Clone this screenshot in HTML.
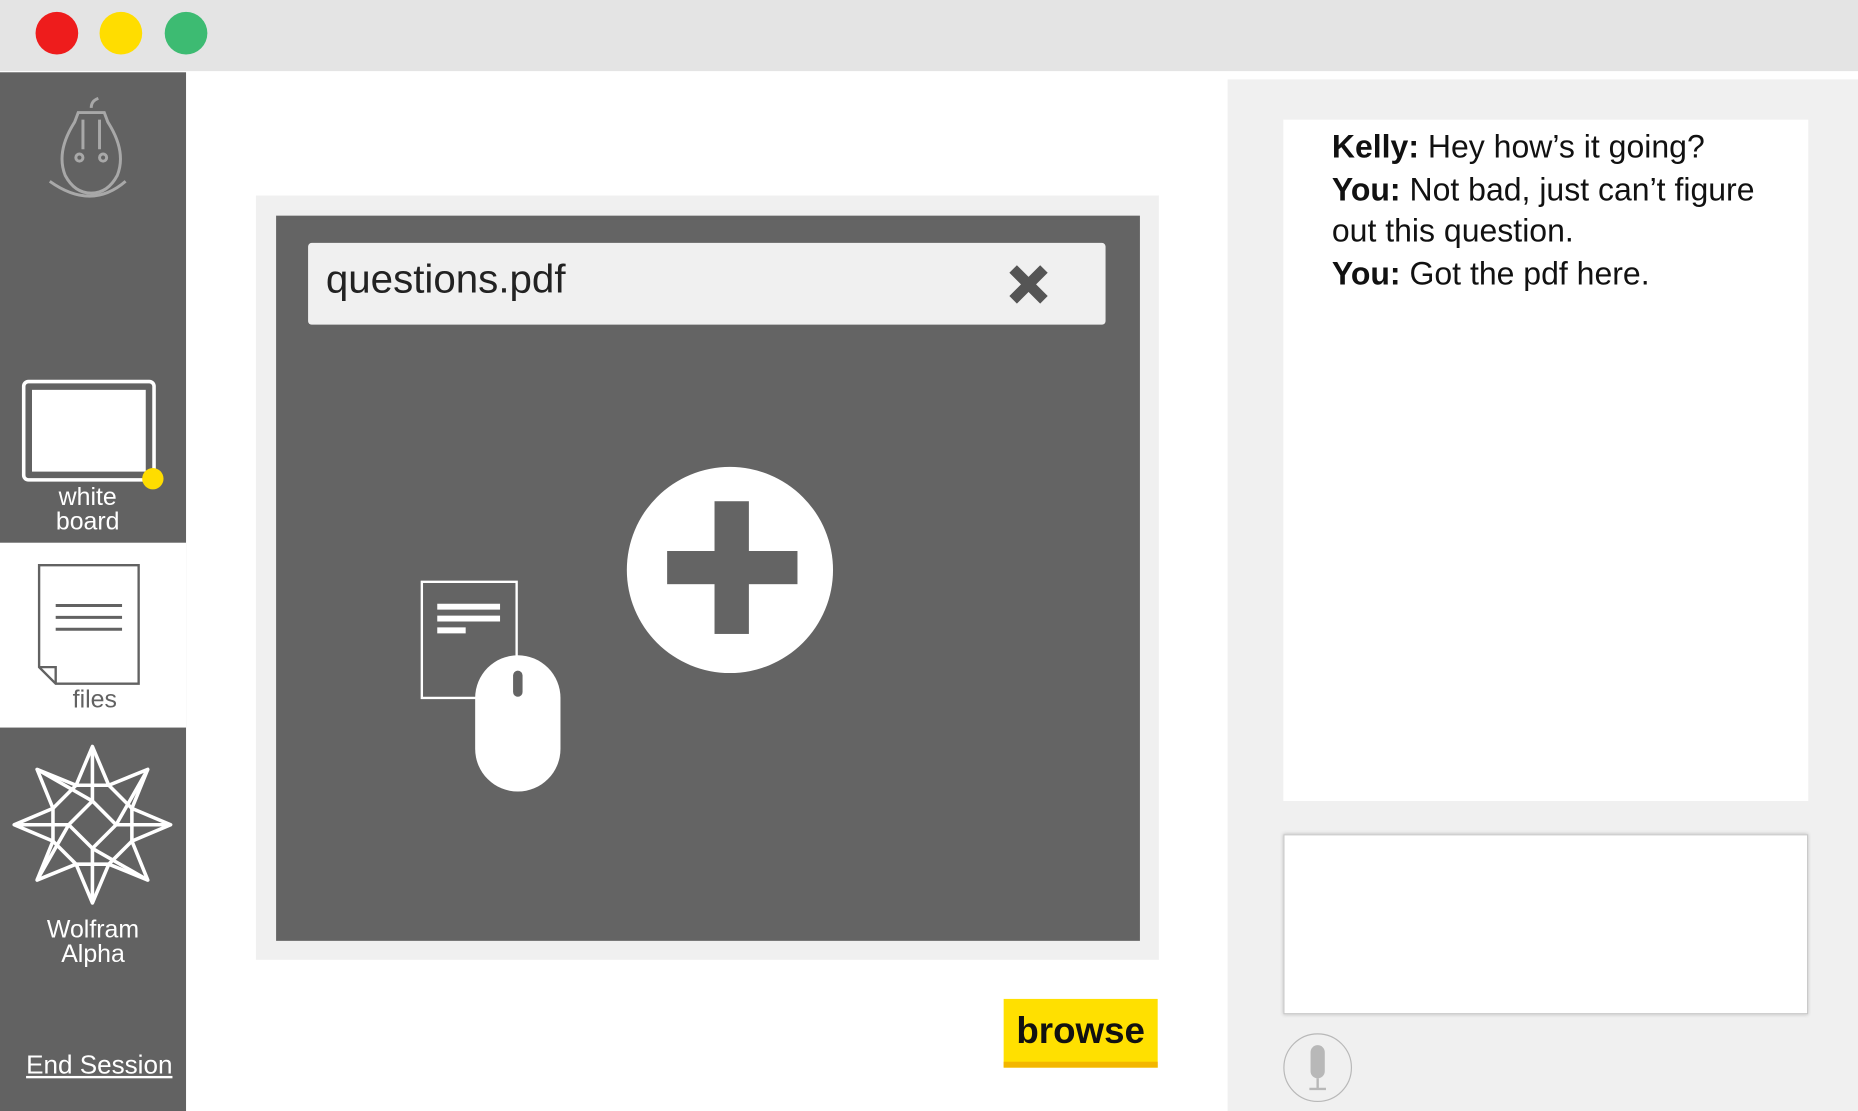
<!DOCTYPE html>
<html><head><meta charset="utf-8"><style>
html,body{margin:0;padding:0;width:1858px;height:1111px;overflow:hidden;background:#fff;font-family:"Liberation Sans","DejaVu Sans",sans-serif}
#s{position:absolute;left:0;top:0;width:1568px;height:938px;transform:scale(1.18495);transform-origin:0 0}
.a{position:absolute}
</style></head><body><div id="s">
<div class="a" style="left:0;top:0;width:1568px;height:60px;background:#e4e4e4"></div>
<div class="a" style="left:30px;top:10px;width:36px;height:36px;border-radius:50%;background:#ee1c1c"></div>
<div class="a" style="left:84px;top:10px;width:36px;height:36px;border-radius:50%;background:#ffdd00"></div>
<div class="a" style="left:139px;top:10px;width:36px;height:36px;border-radius:50%;background:#3dbb72"></div>
<div class="a" style="left:0;top:61px;width:157px;height:877px;background:#626262"></div>
<div class="a" style="left:0;top:458px;width:157px;height:156px;background:#fff"></div>
<svg class="a" style="left:0;top:61px" width="157" height="877" viewBox="0 0 157 877" fill="none">
<g stroke="#a8a8a8" stroke-width="2.5"><path d="M77 30 q0-6 6-8"/><path d="M66 34 h22 l3 8 q16 25 8 45 q-8 15 -22 15 q-14 0 -22-15 q-8-20 8-45 z"/><path d="M42 92 q35 25 64 0"/><path d="M70 40 v25 M84 40 v25"/><circle cx="67" cy="72" r="3"/><circle cx="87" cy="72" r="3"/></g>
<rect x="20" y="261" width="110" height="83" rx="4" stroke="#fff" stroke-width="3"/>
<rect x="27" y="268" width="96" height="69" fill="#fff"/>
<circle cx="129" cy="343" r="9" fill="#ffdd00"/>
<path d="M33 416 h84 v100 h-70 l-14-14 z" fill="#fff" stroke="#626262" stroke-width="2"/>
<path d="M33 502 h14 v14" stroke="#626262" stroke-width="2"/>
<path d="M47 450 h56 M47 460 h56 M47 470 h56" stroke="#626262" stroke-width="2.5"/>
<g stroke="#fff" stroke-width="3" stroke-linejoin="round">
<path d="M78 569 L91.8 601.7 L124.7 588.3 L111.3 621.2 L144 635 L111.3 648.8 L124.7 681.7 L91.8 668.3 L78 701 L64.2 668.3 L31.3 681.7 L44.7 648.8 L12 635 L44.7 621.2 L31.3 588.3 L64.2 601.7 Z"/>
<path d="M91.8 601.7 L111.3 621.2 L111.3 648.8 L91.8 668.3 L64.2 668.3 L44.7 648.8 L44.7 621.2 L64.2 601.7 Z"/>
<path d="M78 569 V615 M78 655 V701 M12 635 H58 M98 635 H144 M78 615 L98 635 L78 655 L58 635 Z"/>
<path d="M124.7 588.3 L98 635 M31.3 681.7 L58 635 M31.3 588.3 L78 615 M124.7 681.7 L78 655"/>
</g>
</svg>
<div class="a" style="left:0;top:409px;width:148px;text-align:center;color:#fff;font-size:21px;line-height:21px">white<br>board</div>
<div class="a" style="left:0;top:579px;width:160px;text-align:center;color:#626262;font-size:21px">files</div>
<div class="a" style="left:0;top:774px;width:157px;text-align:center;color:#fff;font-size:21px;line-height:21px">Wolfram<br>Alpha</div>
<div class="a" style="left:22px;top:886px;color:#fff;font-size:22px;text-decoration:underline">End Session</div>
<div class="a" style="left:216px;top:165px;width:762px;height:645px;background:#f0f0f0"></div>
<div class="a" style="left:233px;top:182px;width:729px;height:612px;background:#646464"></div>
<div class="a" style="left:260px;top:205px;width:673px;height:69px;background:#f0f0f0;border-radius:3px"></div>
<div class="a" style="left:275px;top:217px;font-size:34px;color:#222">questions.pdf</div>
<svg class="a" style="left:850px;top:222px" width="36" height="36"><path d="M5 5 L31 31 M31 5 L5 31" stroke="#555" stroke-width="9"/></svg>
<svg class="a" style="left:350px;top:390px" width="360" height="290">
<circle cx="266" cy="91" r="87" fill="#fff"/><rect x="253" y="33" width="29" height="112" fill="#646464"/><rect x="213" y="75" width="110" height="28" fill="#646464"/>
<rect x="6" y="101" width="80" height="98" fill="none" stroke="#fff" stroke-width="2"/>
<path d="M19 122 h53 M19 132 h53 M19 142 h24" stroke="#fff" stroke-width="5"/>
<rect x="51" y="163" width="72" height="115" rx="36" fill="#fff"/>
<rect x="83" y="176" width="8" height="22" rx="4" fill="#646464"/>
</svg>
<div class="a" style="left:847px;top:843px;width:130px;height:53px;background:#ffe000;border-bottom:5px solid #f3b600;text-align:center;font-size:31px;font-weight:bold;line-height:53px;color:#111">browse</div>
<div class="a" style="left:1036px;top:67px;width:532px;height:871px;background:#f0f0f0"></div>
<div class="a" style="left:1083px;top:101px;width:443px;height:575px;background:#fff"></div>
<div class="a" style="left:1124px;top:107px;font-size:27px;line-height:35.5px;color:#111"><b>Kelly:</b> Hey how’s it going?<br><b>You:</b> Not bad, just can’t figure<br>out this question.<br><b>You:</b> Got the pdf here.</div>
<div class="a" style="left:1083px;top:704px;width:441px;height:150px;background:#fff;border:1px solid #c8c8c8;box-shadow:0 0 3px #bbb"></div>
<div class="a" style="left:1083px;top:872px;width:56px;height:56px;border-radius:50%;border:1.5px solid #b8b8b8"></div>
<svg class="a" style="left:1083px;top:872px" width="58" height="58"><rect x="23" y="10" width="12" height="28" rx="6" fill="#b8b8b8"/><path d="M29 38 v8 M22 47 h14" stroke="#b8b8b8" stroke-width="2"/></svg>
</div></body></html>
